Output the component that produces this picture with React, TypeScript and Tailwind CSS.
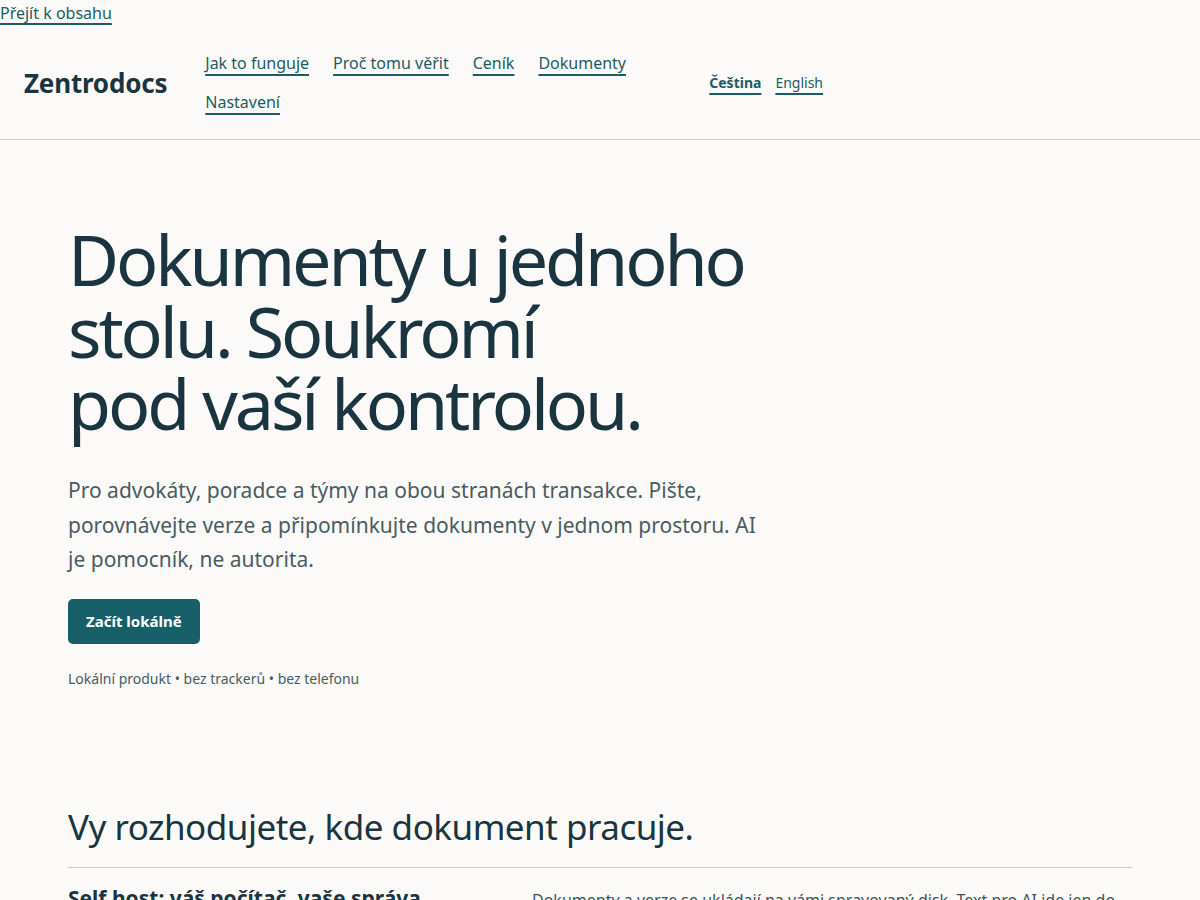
import React from "react";

const font = { fontFamily: '"Noto Sans", "Open Sans", sans-serif' };

export default function App() {
  const navLinks = ["Jak to funguje", "Proč tomu věřit", "Ceník", "Dokumenty", "Nastavení"];
  return (
    <div className="min-h-[900px] bg-[#fbfaf8] text-[#1a3540]" style={font}>
      <a href="#main" className="inline-block text-[16px] leading-[26px] text-[#1d5c66] underline underline-offset-[4px] decoration-[1.5px] decoration-[#1d5c66]">
        Přejít k obsahu
      </a>
      <header className="flex items-center gap-[38px] border-b border-[#c9c9c9] py-[25px] pl-6 pr-6">
        <div className="text-[26px] font-bold leading-none tracking-[-0.2px] text-[#1a3540]">Zentrodocs</div>
        <nav className="flex w-[466px] flex-wrap gap-x-6 gap-y-[15px]">
          {navLinks.map((l) => (
            <a key={l} href="#" className="text-[16px] leading-[24px] text-[#1d5c66] underline underline-offset-[5px] decoration-[1.5px] decoration-[#1d5c66]">
              {l}
            </a>
          ))}
        </nav>
        <div className="flex items-center gap-[14px] text-[14px] leading-[22px]">
          <a href="#" className="font-bold text-[#1d5c66] underline underline-offset-[5px] decoration-[1.5px]">Čeština</a>
          <a href="#" className="text-[#1d5c66] underline underline-offset-[5px] decoration-[1.5px]">English</a>
        </div>
      </header>
      <main id="main" className="px-[68px]">
        <section className="pt-[83px] pb-[115px]">
          <h1 className="max-w-[720px] text-[70px] font-normal leading-[72px] tracking-[-3.1px] text-[#1a3540]">
            Dokumenty u jednoho stolu. Soukromí
            <br />
            pod vaší kontrolou.
          </h1>
          <p className="mt-[34px] max-w-[700px] text-[21px] leading-[34.5px] text-[#4a5c62]">
            Pro advokáty, poradce a týmy na obou stranách transakce. Pište, porovnávejte verze a připomínkujte dokumenty v jednom prostoru. AI je pomocník, ne autorita.
          </p>
          <button className="mt-[22px] block h-[45px] rounded-[5px] bg-[#17606a] px-[18px] text-[15px] font-bold text-white">
            Začít lokálně
          </button>
          <p className="mt-[24px] text-[14px] leading-[22px] text-[#4a5c62]">
            Lokální produkt • bez trackerů • bez telefonu
          </p>
        </section>
        <section>
          <h2 className="text-[35px] font-normal leading-[44px] tracking-[-0.5px] text-[#1a3540]">
            Vy rozhodujete, kde dokument pracuje.
          </h2>
          <hr className="mt-[18px] border-0 border-t border-[#c9c9c9]" />
          <div className="mt-[16px] grid grid-cols-[432px_1fr] gap-8">
            <h3 className="text-[21px] font-bold leading-[29px] text-[#1a3540]">Self host: váš počítač, vaše správa</h3>
            <p className="pt-[3px] text-[16px] leading-[26px] text-[#3f5258]">
              Dokumenty a verze se ukládají na vámi spravovaný disk. Text pro AI jde jen do
              modelu, který si sami zvolíte, a nikdy neopouští vaši infrastrukturu bez souhlasu.
            </p>
          </div>
        </section>
      </main>
    </div>
  );
}
